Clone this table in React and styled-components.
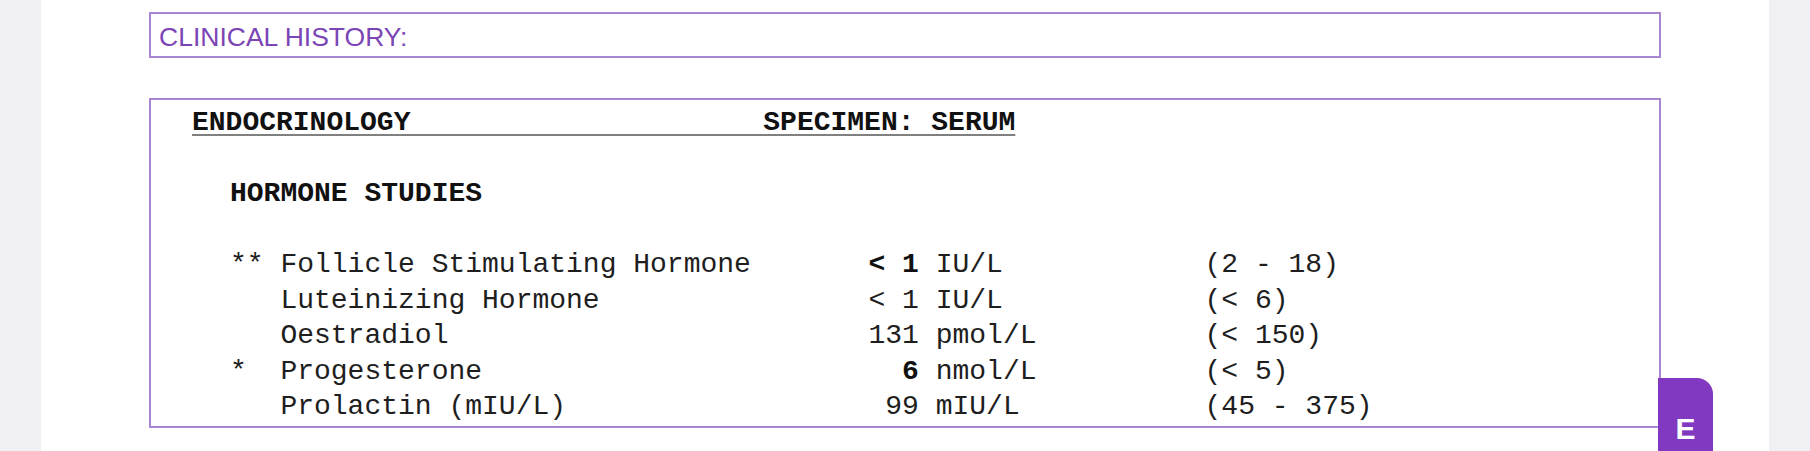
import React from 'react';
import styled, { createGlobalStyle } from 'styled-components';

const GlobalStyle = createGlobalStyle`
  html, body {
    margin: 0;
    padding: 0;
    height: 451px;
    overflow: hidden;
    background: #f0f0f4;
  }
`;

const Page = styled.main`
  position: relative;
  box-sizing: border-box;
  width: 1728px;
  min-height: 451px;
  margin: 0 auto;
  padding: 12px 108px 0;
  background: #ffffff;
`;

const ClinicalBox = styled.section`
  box-sizing: border-box;
  height: 46px;
  padding: 8px 8px 0;
  border: 2px solid #a886d1;
  font-family: 'Liberation Sans', Arial, sans-serif;
  font-size: 26.5px;
  line-height: 30px;
  color: #7b45b6;
`;

const ReportBox = styled.section`
  position: relative;
  box-sizing: border-box;
  height: 330px;
  margin-top: 40px;
  padding: 5px 0 0 41px;
  border: 2px solid #a886d1;
  font-family: 'Courier New', 'Nimbus Mono PS', 'FreeMono', 'Liberation Mono', monospace;
  font-size: 28px;
  line-height: 35.5px;
  color: #1e1e1e;
`;

const DeptHeader = styled.div`
  white-space: pre;
  font-weight: 700;
  color: #111;
  text-decoration: underline;
  text-decoration-color: #808080;
  text-decoration-thickness: 1.5px;
  text-underline-offset: 4px;
  margin-bottom: 35.5px;
`;

const GroupTitle = styled.div`
  margin-left: 38px;
  margin-bottom: 35.5px;
  font-weight: 700;
  color: #111;
`;

const Results = styled.div`
  margin-left: 38px;
`;

const ResultRow = styled.div`
  display: grid;
  grid-template-columns: 3ch 35ch 3ch 1ch 16ch auto;
  white-space: pre;
`;

const Value = styled.span`
  grid-column: 3;
  text-align: right;
  font-weight: ${({ $flag }) => ($flag ? 700 : 400)};
  color: ${({ $flag }) => ($flag ? '#111' : 'inherit')};
`;

const Unit = styled.span`
  grid-column: 5;
`;

const EditTab = styled.div`
  position: absolute;
  left: calc(100% - 1px);
  top: 278px;
  width: 55px;
  height: 90px;
  padding-top: 36px;
  box-sizing: border-box;
  background: #8139c1;
  border-top-right-radius: 16px;
  color: #fff;
  font-family: 'Liberation Sans', Arial, sans-serif;
  font-weight: 700;
  font-size: 30px;
  line-height: 30px;
  text-align: center;
`;

const results = [
  { flag: '**', name: 'Follicle Stimulating Hormone', value: '< 1', unit: 'IU/L', range: '(2 - 18)', high: true },
  { flag: '', name: 'Luteinizing Hormone', value: '< 1', unit: 'IU/L', range: '(< 6)' },
  { flag: '', name: 'Oestradiol', value: '131', unit: 'pmol/L', range: '(< 150)' },
  { flag: '*', name: 'Progesterone', value: '6', unit: 'nmol/L', range: '(< 5)', high: true },
  { flag: '', name: 'Prolactin (mIU/L)', value: '99', unit: 'mIU/L', range: '(45 - 375)' },
];

export default function App() {
  return (
    <>
      <GlobalStyle />
      <Page>
        <ClinicalBox>CLINICAL HISTORY:</ClinicalBox>
        <ReportBox>
          <DeptHeader>{'ENDOCRINOLOGY' + ' '.repeat(21) + 'SPECIMEN: SERUM'}</DeptHeader>
          <GroupTitle>HORMONE STUDIES</GroupTitle>
          <Results>
            {results.map((r) => (
              <ResultRow key={r.name}>
                <span>{r.flag}</span>
                <span>{r.name}</span>
                <Value $flag={r.high}>{r.value}</Value>
                <Unit>{r.unit}</Unit>
                <span>{r.range}</span>
              </ResultRow>
            ))}
          </Results>
          <EditTab>E</EditTab>
        </ReportBox>
      </Page>
    </>
  );
}
